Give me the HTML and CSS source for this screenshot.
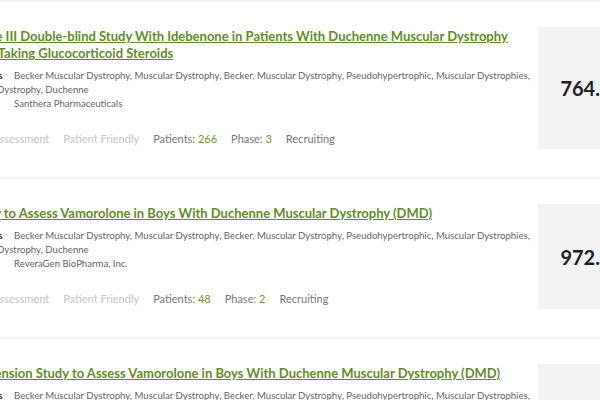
FILE: index.html
```html
<!DOCTYPE html>
<html lang="en">
  <head>
    <meta charset="UTF-8" />
    <meta name="viewport" content="width=device-width, initial-scale=1.0" />
    <title>Clinical Trials</title>
    <link rel="stylesheet" href="styles.css">
  </head>
  <body>
    <div class="trial-list">
      <div class="trial">
        <div class="trial-info">
          <a class="trial-title" href="#">A Phase III Double-blind Study With Idebenone in Patients With Duchenne Muscular Dystrophy (DMD) Taking Glucocorticoid Steroids</a>
          <p class="trial-line">
            <span class="label">Conditions</span>Becker Muscular Dystrophy, Muscular Dystrophy, Becker, Muscular Dystrophy, Pseudohypertrophic, Muscular Dystrophies, Muscular Dystrophy, Duchenne
          </p>
          <p class="trial-line">
            <span class="label">Sponsor</span>Santhera Pharmaceuticals
          </p>
          <div class="trial-meta">
            <span class="muted">Assessment</span>
            <span class="muted">Patient Friendly</span>
            <span>Patients: <b>266</b></span>
            <span>Phase: <b>3</b></span>
            <span>Recruiting</span>
          </div>
        </div>
        <div class="trial-score">764.3</div>
      </div>

      <div class="trial">
        <div class="trial-info">
          <a class="trial-title" href="#">A Study to Assess Vamorolone in Boys With Duchenne Muscular Dystrophy (DMD)</a>
          <p class="trial-line">
            <span class="label">Conditions</span>Becker Muscular Dystrophy, Muscular Dystrophy, Becker, Muscular Dystrophy, Pseudohypertrophic, Muscular Dystrophies, Muscular Dystrophy, Duchenne
          </p>
          <p class="trial-line">
            <span class="label">Sponsor</span>ReveraGen BioPharma, Inc.
          </p>
          <div class="trial-meta">
            <span class="muted">Assessment</span>
            <span class="muted">Patient Friendly</span>
            <span>Patients: <b>48</b></span>
            <span>Phase: <b>2</b></span>
            <span>Recruiting</span>
          </div>
        </div>
        <div class="trial-score">972.2</div>
      </div>

      <div class="trial">
        <div class="trial-info">
          <a class="trial-title" href="#">An Extension Study to Assess Vamorolone in Boys With Duchenne Muscular Dystrophy (DMD)</a>
          <p class="trial-line">
            <span class="label">Conditions</span>Becker Muscular Dystrophy, Muscular Dystrophy, Becker, Muscular Dystrophy, Pseudohypertrophic, Muscular Dystrophies, Muscular Dystrophy, Duchenne
          </p>
          <p class="trial-line">
            <span class="label">Sponsor</span>ReveraGen BioPharma, Inc.
          </p>
          <div class="trial-meta">
            <span class="muted">Assessment</span>
            <span class="muted">Patient Friendly</span>
            <span>Patients: <b>121</b></span>
            <span>Phase: <b>2</b></span>
            <span>Recruiting</span>
          </div>
        </div>
        <div class="trial-score">951.8</div>
      </div>
    </div>
  </body>
</html>
```

FILE: styles.css
```css
body {
  margin: 0;
  font-family: Lato, "Open Sans", sans-serif;
  background-color: #ffffff;
  overflow: hidden;
}

.trial-list {
  margin-left: -44px;
  width: 690px;
  border-top: 2px solid #f3f3f3;
}

.trial {
  display: flex;
  gap: 2px;
  padding: 25px 0 28px;
  border-bottom: 2px solid #f3f3f3;
}

.trial-info {
  width: 580px;
}

.trial-title {
  display: block;
  margin-top: 1px;
  font-size: 13px;
  font-weight: bold;
  line-height: 17px;
  color: #5f8f1e;
  text-decoration: underline;
}

.trial-line {
  margin: 0;
  font-size: 9.6px;
  line-height: 14px;
  color: #666;
}

.trial-title + .trial-line {
  margin-top: 7px;
}

.label {
  display: inline-block;
  width: 58px;
  font-weight: bold;
  color: #333;
}

.trial-meta {
  display: flex;
  gap: 14px;
  margin-top: 18px;
  padding-left: 36px;
  font-size: 11px;
  line-height: 20px;
  color: #777;
}

.trial-meta b {
  font-weight: normal;
  color: #6a9a2a;
}

.trial-meta .muted {
  color: #c4c4c4;
}

.trial-score {
  flex: none;
  width: 96px;
  display: flex;
  align-items: center;
  justify-content: center;
  background-color: #f2f3f3;
  font-size: 20px;
  font-weight: bold;
  color: #222;
}
```
